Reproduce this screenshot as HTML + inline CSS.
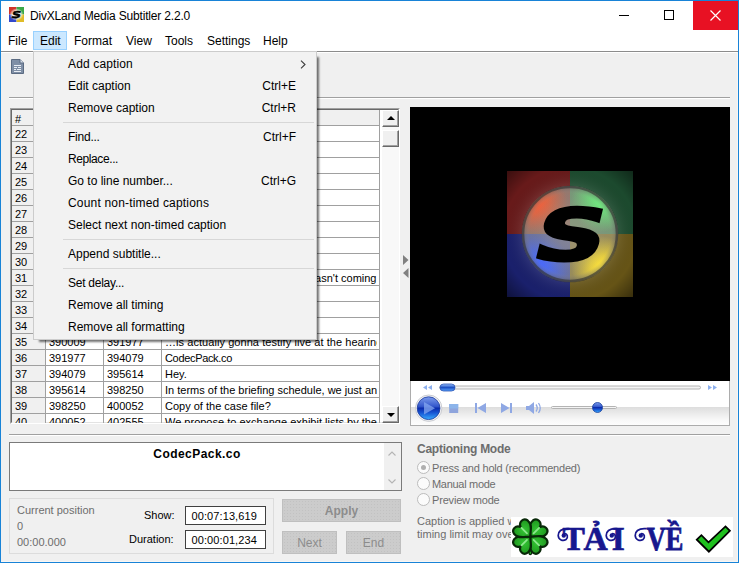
<!DOCTYPE html>
<html lang="en">
<head>
<meta charset="utf-8">
<title>DivXLand Media Subtitler 2.2.0</title>
<style>
*{box-sizing:border-box;margin:0;padding:0}
html,body{width:739px;height:563px;overflow:hidden}
body{position:relative;background:#f0f0f0;font-family:"Liberation Sans",sans-serif;font-size:12px;color:#000;line-height:1}
.a{position:absolute}
.t{position:absolute;white-space:nowrap;line-height:14px;height:14px}
.ui{font-size:12px}
.tb{font-size:11px}
#frame{left:0;top:0;width:739px;height:563px;border:1px solid #1883d7;z-index:50;pointer-events:none}
#title{left:1px;top:1px;width:737px;height:30px;background:#fff}
#menubar{left:1px;top:31px;width:737px;height:20px;background:#fff}
#edit-hl{left:33px;top:31px;width:34px;height:19px;background:#cce8ff;border:1px solid #99d1ff}
#close{left:693px;top:1px;width:45px;height:29px;background:#e81123}
/* dropdown */
#menu{left:33px;top:51px;width:284px;height:289px;background:#f2f2f2;border:1px solid #ccc;z-index:20;box-shadow:4px 4px 2px -2px rgba(0,0,0,.55)}
#menu .t{left:34px}
#menu .k{left:auto;right:20px}
#menu .sep{position:absolute;left:29px;right:2px;height:1px;background:#d7d7d7}
/* table */
#grid{left:10px;top:108px;width:390px;height:316px;background:#fff;border:1px solid #a0a0a0;border-right-color:#fff;border-bottom-color:#fff;overflow:hidden}
#grid .in{position:absolute;left:0;top:0;right:0;bottom:0;border:1px solid #696969;border-right-color:#e3e3e3;border-bottom-color:#e3e3e3}

#grid .hl{left:1px;width:368px;height:1px;background:#a0a0a0}
#grid .vl{top:1px;width:1px;height:314px;background:#a0a0a0}
#grid .tb{line-height:13px;height:13px}

.ln{height:2px;border-top:1px solid #a0a0a0;border-bottom:1px solid #fff}
/* scrollbar */
#sb{left:382px;top:110px;width:17px;height:313px;background:#f8f8f8}
.btn3{position:absolute;left:0;width:17px;height:17px;background:#f0f0f0;border:1px solid #fff;border-right-color:#696969;border-bottom-color:#696969;box-shadow:inset -1px -1px 0 #a0a0a0}
/* video */
#video{left:410px;top:107px;width:320px;height:274px;background:#000}
#ctrl{left:410px;top:381px;width:320px;height:45px;background:linear-gradient(#fff 0,#fff 25.5px,#dedede 26.5px,#ececec 33px,#f8f8f8 39px,#fdfdfd 44px);border:1px solid #acacac;border-top:0}

#txt{left:9px;top:442px;width:393px;height:49px;background:#fff;border:1px solid #7a7a7a}
#grp{left:9px;top:498px;width:265px;height:56px;border:1px solid #dcdcdc}
.inp{position:absolute;width:81px;height:19px;background:#fff;border:1px solid #404040}
.dis{color:#6d6d6d}
.btn{position:absolute;background:#cccccc;border:1px solid #bfbfbf;background-image:radial-gradient(#c2c2c2 0.6px,transparent 0.7px);background-size:3px 3px}
.rad{position:absolute;width:13px;height:13px;border-radius:50%;border:1px solid #bcbcbc;background:#fbfbfb}
#wm{left:511px;top:517px;width:222px;height:40px;background:#fff;z-index:30}
</style>
</head>
<body>
<div id="title" class="a"></div>
<span class="t ui" style="left:30px;top:9px;letter-spacing:-0.18px">DivXLand Media Subtitler 2.2.0</span>
<div id="close" class="a"></div>
<div id="menubar" class="a"></div>
<div id="edit-hl" class="a"></div>
<span class="t ui" style="left:8px;top:34px">File</span>
<span class="t ui" style="left:40px;top:34px">Edit</span>
<span class="t ui" style="left:74px;top:34px">Format</span>
<span class="t ui" style="left:126px;top:34px">View</span>
<span class="t ui" style="left:165px;top:34px">Tools</span>
<span class="t ui" style="left:207px;top:34px">Settings</span>
<span class="t ui" style="left:263px;top:34px">Help</span>

<div id="grid" class="a"><div class="in"></div>
<div class="a" style="left:1px;top:1px;width:34px;height:314px;background:#f0f0f0"></div>
<div class="a" style="left:1px;top:1px;width:368px;height:16px;background:#f0f0f0"></div>
<div class="a hl" style="top:16px"></div>
<div class="a hl" style="top:32px"></div>
<div class="a hl" style="top:48px"></div>
<div class="a hl" style="top:64px"></div>
<div class="a hl" style="top:80px"></div>
<div class="a hl" style="top:96px"></div>
<div class="a hl" style="top:112px"></div>
<div class="a hl" style="top:128px"></div>
<div class="a hl" style="top:144px"></div>
<div class="a hl" style="top:160px"></div>
<div class="a hl" style="top:176px"></div>
<div class="a hl" style="top:192px"></div>
<div class="a hl" style="top:208px"></div>
<div class="a hl" style="top:224px"></div>
<div class="a hl" style="top:240px"></div>
<div class="a hl" style="top:256px"></div>
<div class="a hl" style="top:272px"></div>
<div class="a hl" style="top:288px"></div>
<div class="a hl" style="top:304px"></div>
<div class="a vl" style="left:34px"></div>
<div class="a vl" style="left:92px"></div>
<div class="a vl" style="left:150px"></div>
<div class="a vl" style="left:368px"></div>
<span class="t tb" style="left:4px;top:4px">#</span>
<span class="t tb" style="left:4px;top:19px">22</span>
<span class="t tb" style="left:4px;top:35px">23</span>
<span class="t tb" style="left:4px;top:51px">24</span>
<span class="t tb" style="left:4px;top:67px">25</span>
<span class="t tb" style="left:4px;top:83px">26</span>
<span class="t tb" style="left:4px;top:99px">27</span>
<span class="t tb" style="left:4px;top:115px">28</span>
<span class="t tb" style="left:4px;top:131px">29</span>
<span class="t tb" style="left:4px;top:147px">30</span>
<span class="t tb" style="left:4px;top:163px">31</span>
<span class="t tb" style="left:4px;top:179px">32</span>
<span class="t tb" style="left:4px;top:195px">33</span>
<span class="t tb" style="left:4px;top:211px">34</span>
<span class="t tb" style="left:4px;top:227px">35</span>
<span class="t tb" style="left:38px;top:227px">390009</span>
<span class="t tb" style="left:96px;top:227px">391977</span>
<span class="t tb" style="left:4px;top:243px">36</span>
<span class="t tb" style="left:38px;top:243px">391977</span>
<span class="t tb" style="left:96px;top:243px">394079</span>
<span class="t tb" style="left:4px;top:259px">37</span>
<span class="t tb" style="left:38px;top:259px">394079</span>
<span class="t tb" style="left:96px;top:259px">395614</span>
<span class="t tb" style="left:4px;top:275px">38</span>
<span class="t tb" style="left:38px;top:275px">395614</span>
<span class="t tb" style="left:96px;top:275px">398250</span>
<span class="t tb" style="left:4px;top:291px">39</span>
<span class="t tb" style="left:38px;top:291px">398250</span>
<span class="t tb" style="left:96px;top:291px">400052</span>
<span class="t tb" style="left:4px;top:307px">40</span>
<span class="t tb" style="left:38px;top:307px">400052</span>
<span class="t tb" style="left:96px;top:307px">402555</span>
<div class="a" style="left:151px;top:1px;width:215px;height:314px;overflow:hidden">
<span class="t tb" style="left:3px;top:226px;letter-spacing:0.06px">…is actually gonna testify live at the hearing</span>
<span class="t tb" style="left:3px;top:242px;letter-spacing:-0.33px">CodecPack.co</span>
<span class="t tb" style="left:3px;top:258px">Hey.</span>
<span class="t tb" style="left:3px;top:274px">In terms of the briefing schedule, we just an</span>
<span class="t tb" style="left:3px;top:290px">Copy of the case file?</span>
<span class="t tb" style="left:3px;top:306px">We propose to exchange exhibit lists by the</span>
<span class="t tb" style="right:0.500px;top:162px">I told you before that he wasn't coming</span>
</div>
</div>


<!-- title icon -->
<svg class="a" style="left:9px;top:7px" width="15" height="15" viewBox="0 0 15 15">
<defs><radialGradient id="ig" cx="0.5" cy="0.5" r="0.5"><stop offset="0.55" stop-color="#f4f0e6"/><stop offset="1" stop-color="#f4f0e6" stop-opacity="0"/></radialGradient></defs>
<rect x="0" y="0" width="7.500" height="7.500" fill="#d0342a"/><rect x="7.500" y="0" width="7.500" height="7.500" fill="#3aa848"/>
<rect x="0" y="7.500" width="7.500" height="7.500" fill="#3148cc"/><rect x="7.500" y="7.500" width="7.500" height="7.500" fill="#e0bc28"/>
<ellipse cx="7.500" cy="7.500" rx="7" ry="6.300" fill="url(#ig)"/>
<text x="7.500" y="11" font-family="DejaVu Sans, sans-serif" font-weight="bold" font-size="9.500" text-anchor="middle" fill="#000" stroke="#000" stroke-width="0.500" transform="translate(7.500 7.500) skewX(-14) scale(1.35 1) translate(-7.500 -7.500)">S</text>
</svg>
<!-- window buttons -->
<div class="a" style="left:619px;top:15px;width:10px;height:1px;background:#000"></div>
<div class="a" style="left:664px;top:10px;width:10px;height:10px;border:1px solid #000"></div>
<svg class="a" style="left:710px;top:10px" width="11" height="11" viewBox="0 0 11 11"><path d="M0.5 0.5L10.5 10.5M10.5 0.5L0.5 10.5" stroke="#fff" stroke-width="1.2" fill="none"/></svg>
<!-- toolbar -->
<div class="a ln" style="left:1px;top:51px;width:737px;border-top-color:#8c8c8c"></div>
<div class="a ln" style="left:9px;top:97px;width:721px"></div>
<svg class="a" style="left:11px;top:59px" width="13" height="15" viewBox="0 0 13 15">
<path d="M0.5 0.5H9L12.5 4V14.5H0.5Z" fill="#7f8fa6" stroke="#5b6b82"/>
<path d="M9 0.5V4H12.5" fill="#dfe6ef" stroke="#5b6b82"/>
<path d="M3 6.5H10M3 8.5H6M7 8.5H10M3 10.5H5M6 10.5H10M3 12.5H10" stroke="#e8edf4" stroke-width="1"/>
</svg>
<!-- scrollbar -->
<div id="sb" class="a">
<div class="btn3" style="top:0"></div>
<div class="btn3" style="top:20px"></div>
<div class="btn3" style="top:296px"></div>
<svg class="a" style="left:5px;top:6px" width="8" height="4" viewBox="0 0 8 4"><path d="M0 4L4 0L8 4Z" fill="#000"/></svg>
<svg class="a" style="left:5px;top:303px" width="8" height="4" viewBox="0 0 8 4"><path d="M0 0L4 4L8 0Z" fill="#000"/></svg>
</div>
<!-- splitter arrows -->
<svg class="a" style="left:403px;top:255px" width="6" height="24" viewBox="0 0 6 24"><path d="M0 0L5.5 5L0 10Z M5.5 13L0 18L5.5 23Z" fill="#808080"/></svg>
<!-- video -->
<div id="video" class="a">
<svg class="a" style="left:97px;top:64px" width="126" height="126" viewBox="0 0 126 126">
<defs>
<radialGradient id="qg" cx="63" cy="63" r="89" gradientUnits="userSpaceOnUse"><stop offset="0.5" stop-color="#fff" stop-opacity="0.12"/><stop offset="0.75" stop-color="#000" stop-opacity="0"/><stop offset="1" stop-color="#000" stop-opacity="0.45"/></radialGradient>
<radialGradient id="cg" cx="63" cy="63" r="48" gradientUnits="userSpaceOnUse"><stop offset="0" stop-color="#a09888" stop-opacity="0.55"/><stop offset="0.5" stop-color="#a09888" stop-opacity="0.25"/><stop offset="0.85" stop-color="#888" stop-opacity="0"/><stop offset="1" stop-color="#444" stop-opacity="0.5"/></radialGradient>
<radialGradient id="s1"><stop offset="0" stop-color="#f0603c"/><stop offset="0.35" stop-color="#e8643f" stop-opacity="0.85"/><stop offset="1" stop-color="#e8643f" stop-opacity="0"/></radialGradient>
<radialGradient id="s2"><stop offset="0" stop-color="#70f080"/><stop offset="0.35" stop-color="#6ee07c" stop-opacity="0.85"/><stop offset="1" stop-color="#6ee07c" stop-opacity="0"/></radialGradient>
<radialGradient id="s3"><stop offset="0" stop-color="#4868ff"/><stop offset="0.35" stop-color="#4c6cf4" stop-opacity="0.85"/><stop offset="1" stop-color="#4c6cf4" stop-opacity="0"/></radialGradient>
<radialGradient id="s4"><stop offset="0" stop-color="#ffe43c"/><stop offset="0.35" stop-color="#f2d83c" stop-opacity="0.85"/><stop offset="1" stop-color="#f2d83c" stop-opacity="0"/></radialGradient>
<clipPath id="cc"><circle cx="63" cy="63" r="48"/></clipPath>
</defs>
<rect x="0" y="0" width="63" height="63" fill="#681a1a"/><rect x="63" y="0" width="63" height="63" fill="#1c4a2e"/>
<rect x="0" y="63" width="63" height="63" fill="#1a206c"/><rect x="63" y="63" width="63" height="63" fill="#665416"/>
<rect width="126" height="126" fill="url(#qg)"/>
<g clip-path="url(#cc)">
<rect x="0" y="0" width="63" height="63" fill="#96786e"/><rect x="63" y="0" width="63" height="63" fill="#789878"/>
<rect x="0" y="63" width="63" height="63" fill="#6a72a2"/><rect x="63" y="63" width="63" height="63" fill="#988c5a"/>
<circle cx="31" cy="33" r="30" fill="url(#s1)"/><circle cx="94" cy="31" r="30" fill="url(#s2)"/>
<circle cx="33" cy="94" r="30" fill="url(#s3)"/><circle cx="94" cy="95" r="30" fill="url(#s4)"/>
<circle cx="63" cy="63" r="48" fill="url(#cg)"/>
</g>
<circle cx="63" cy="63" r="47" fill="none" stroke="#303030" stroke-opacity="0.6" stroke-width="2.600"/>
<text x="63" y="89.500" font-family="DejaVu Sans, sans-serif" font-weight="bold" font-size="71" text-anchor="middle" fill="#000" stroke="#000" stroke-width="3" stroke-linejoin="miter" transform="translate(63 63) skewX(-14) scale(1.37 1) translate(-61.800 -63)">S</text>
</svg>
</div>
<div id="ctrl" class="a">
<svg class="a" style="left:-1px;top:0" width="320" height="44" viewBox="0 0 320 44">
<defs>
<linearGradient id="pb" x1="0" y1="0" x2="0" y2="1"><stop offset="0" stop-color="#7c9cec"/><stop offset="0.42" stop-color="#3458cc"/><stop offset="0.5" stop-color="#0c2cac"/><stop offset="0.68" stop-color="#1450d0"/><stop offset="1" stop-color="#38acff"/></linearGradient>
<linearGradient id="th" x1="0" y1="0" x2="0" y2="1"><stop offset="0" stop-color="#9cc4ff"/><stop offset="0.5" stop-color="#1c50c4"/><stop offset="1" stop-color="#5aa6ff"/></linearGradient>
</defs>
<!-- seek -->
<path d="M13 6.5L17 4V9ZM18 6.5L22 4V9Z" fill="#8db0ee"/>
<path d="M298 4L302 6.5L298 9ZM303 4L307 6.5L303 9Z" fill="#8db0ee"/>
<rect x="29.500" y="5" width="261" height="3" rx="1.500" fill="#f4f4f4" stroke="#b4b4b4"/>
<rect x="30" y="3" width="15" height="7" rx="3.500" fill="url(#th)" stroke="#2c54b4" stroke-width="0.800"/>
<!-- play -->
<circle cx="18.700" cy="27.200" r="13.200" fill="#f4f4f6" stroke="#c4c6cc" stroke-width="0.900"/>
<circle cx="18.600" cy="27.200" r="11.400" fill="url(#pb)" stroke="#1a3a9c" stroke-width="0.800"/>
<path d="M14 21L25 27.300L14 33.600Z" fill="#86a8f0" fill-opacity="0.75"/>
<!-- stop -->
<rect x="39.200" y="23" width="9" height="9" fill="#8ea4dc"/><rect x="39.200" y="23" width="9" height="4.500" fill="#8cb4ea"/>
<!-- prev -->
<path d="M65 22H67V32H65ZM76 22V32L67.500 27Z" fill="#8fa8e4"/>
<!-- next -->
<path d="M100 22H102V32H100ZM91 22V32L99.500 27Z" fill="#8fa8e4"/>
<!-- volume -->
<path d="M116 25H119L124 21V33L119 29H116Z" fill="#8fa8e4"/>
<path d="M126 23.500Q128.500 27 126 30.500M128.500 22Q132 27 128.500 32" fill="none" stroke="#8fa8e4" stroke-width="1.300"/>
<rect x="141.500" y="25.500" width="65" height="2" rx="1" fill="#f4f4f4" stroke="#b4b4b4"/>
<circle cx="187.500" cy="26.500" r="5" fill="url(#pb)" stroke="#173f9c" stroke-width="0.800"/>
</svg>
</div>


<!-- bottom -->
<div class="a ln" style="left:9px;top:434px;width:721px"></div>
<div id="txt" class="a">
<span class="t" style="left:0;width:374px;text-align:center;top:4px;font-size:12px;font-weight:bold;letter-spacing:0.45px">CodecPack.co</span>
<div class="a" style="right:0;top:0;width:17px;height:47px;background:#f0f0f0"></div>
<svg class="a" style="right:5px;top:8px" width="8" height="34" viewBox="0 0 8 34"><path d="M0.500 4.500L4 1L7.500 4.500M0.500 28.500L4 32L7.500 28.500" fill="none" stroke="#b4b4b4" stroke-width="1.100"/></svg>
</div>
<div id="grp" class="a"></div>
<span class="t tb dis" style="left:17px;top:503px">Current position</span>
<span class="t tb dis" style="left:17px;top:519px">0</span>
<span class="t tb dis" style="left:17px;top:535px">00:00.000</span>
<span class="t tb" style="left:144px;top:508px">Show:</span>
<span class="t tb" style="left:129px;top:532px">Duration:</span>
<div class="inp" style="left:185px;top:506px"></div><span class="t tb" style="left:191.500px;top:509px;letter-spacing:0.1px">00:07:13,619</span>
<div class="inp" style="left:185px;top:530px"></div><span class="t tb" style="left:191.500px;top:533px;letter-spacing:0.1px">00:00:01,234</span>
<div class="btn" style="left:282px;top:499px;width:119px;height:23px"></div>
<span class="t ui" style="left:282px;width:119px;text-align:center;top:504px;font-weight:bold;color:#8c8c8c">Apply</span>
<div class="btn" style="left:282px;top:531px;width:55px;height:23px"></div>
<span class="t ui" style="left:282px;width:55px;text-align:center;top:536px;color:#8c8c8c">Next</span>
<div class="btn" style="left:346px;top:531px;width:55px;height:23px"></div>
<span class="t ui" style="left:346px;width:55px;text-align:center;top:536px;color:#8c8c8c">End</span>
<!-- captioning mode -->
<span class="t tb dis" style="left:417px;top:442px;font-weight:bold;font-size:12px;letter-spacing:-0.26px">Captioning Mode</span>
<div class="rad" style="left:417px;top:461px"><div class="a" style="left:3px;top:3px;width:5px;height:5px;border-radius:50%;background:#b0b0b0"></div></div>
<div class="rad" style="left:417px;top:477px"></div>
<div class="rad" style="left:417px;top:493px"></div>
<span class="t tb dis" style="left:432px;top:461px;letter-spacing:-0.21px">Press and hold (recommended)</span>
<span class="t tb dis" style="left:432px;top:477px;letter-spacing:-0.3px">Manual mode</span>
<span class="t tb dis" style="left:432px;top:493px;letter-spacing:-0.18px">Preview mode</span>
<span class="t tb dis" style="left:417px;top:514px">Caption is applied while pressing and holding</span>
<span class="t tb dis" style="left:417px;top:527px">timing limit may overlap</span>
<!-- watermark -->
<div id="wm" class="a">
<svg class="a" style="left:0;top:0" width="222" height="40" viewBox="0 0 222 40">
<defs><radialGradient id="lf" cx="0" cy="-10" r="12" gradientUnits="userSpaceOnUse"><stop offset="0" stop-color="#34c434"/><stop offset="1" stop-color="#1d961d"/></radialGradient></defs><path d="M19.300 30V36.500" stroke="#082808" stroke-width="3.600" stroke-linecap="round"/><path d="M19.300 30V36.300" stroke="#25a825" stroke-width="1.400" stroke-linecap="round"/>
<g stroke="#082808" stroke-width="2.400" fill="url(#lf)" stroke-linejoin="round">
<path transform="translate(19.300 19.600) rotate(45) scale(0.91)" d="M0 0C-3.500 -4 -11.500 -7 -10.500 -14.500C-9.500 -20.500 -2 -20.500 0 -15C2 -20.500 9.500 -20.500 10.500 -14.500C11.500 -7 3.500 -4 0 0Z"/>
<path transform="translate(19.300 19.600) rotate(135) scale(0.91)" d="M0 0C-3.500 -4 -11.500 -7 -10.500 -14.500C-9.500 -20.500 -2 -20.500 0 -15C2 -20.500 9.500 -20.500 10.500 -14.500C11.500 -7 3.500 -4 0 0Z"/>
<path transform="translate(19.300 19.600) rotate(225) scale(0.91)" d="M0 0C-3.500 -4 -11.500 -7 -10.500 -14.500C-9.500 -20.500 -2 -20.500 0 -15C2 -20.500 9.500 -20.500 10.500 -14.500C11.500 -7 3.500 -4 0 0Z"/>
<path transform="translate(19.300 19.600) rotate(315) scale(0.91)" d="M0 0C-3.500 -4 -11.500 -7 -10.500 -14.500C-9.500 -20.500 -2 -20.500 0 -15C2 -20.500 9.500 -20.500 10.500 -14.500C11.500 -7 3.500 -4 0 0Z"/>
</g>
<path d="M16 16.300L10.500 10.800M22.600 16.300L28.100 10.800M16 22.900L10.500 28.400M22.600 22.900L28.100 28.400" stroke="#8ce88c" stroke-width="1.800" stroke-linecap="round" fill="none"/>
<text x="51.500 72.500 100.700" y="32.800" font-family="Liberation Serif, serif" font-weight="bold" font-size="33.500" fill="#17178e" stroke="#17178e" stroke-width="0.700">TẢI</text>
<text x="0 23.900" y="32.800" transform="translate(135.500 0) scale(0.8 1)" font-family="Liberation Serif, serif" font-weight="bold" font-size="33.500" fill="#17178e" stroke="#17178e" stroke-width="0.800">VỀ</text>
<path d="M58 11.7C50 11 47 15 47.2 18.5C47.5 23 52 24.5 55 22.5C57.5 20.5 56.5 16.5 53.5 16.5" fill="none" stroke="#17178e" stroke-width="1.700" stroke-linecap="round"/><circle cx="52.8" cy="18.5" r="2.200" fill="#17178e"/>
<path d="M106 11.7C98 11 95 15 95.2 18.5C95.5 23 100 24.5 103 22.5C105.5 20.5 104.5 16.5 101.5 16.5" fill="none" stroke="#17178e" stroke-width="1.700" stroke-linecap="round"/><circle cx="100.8" cy="18.5" r="2.200" fill="#17178e"/>
<path d="M135 11.7C127 11 124 15 124.2 18.5C124.5 23 129 24.5 132 22.5C134.5 20.5 133.5 16.5 130.5 16.5" fill="none" stroke="#17178e" stroke-width="1.700" stroke-linecap="round"/><circle cx="129.8" cy="18.5" r="2.200" fill="#17178e"/>
<path d="M185.800 22.700L190.400 18.200L197.500 25.300L214.500 9.400L218.900 13.800L197.900 34.700Z" fill="#1fc01f" stroke="#000" stroke-width="1.800" stroke-linejoin="miter"/>
</svg>
</div>

<div id="menu" class="a">
<span class="t ui" style="top:5px;letter-spacing:0.14px">Add caption</span>
<svg class="a" style="left:266px;top:7.500px" width="6" height="9" viewBox="0 0 6 9"><path d="M1 0.700L5 4.500L1 8.300" fill="none" stroke="#3c3c3c" stroke-width="1.100"/></svg>
<span class="t ui" style="top:27px">Edit caption</span><span class="t ui k" style="top:27px">Ctrl+E</span>
<span class="t ui" style="top:49px">Remove caption</span><span class="t ui k" style="top:49px">Ctrl+R</span>
<div class="sep" style="top:70px"></div>
<span class="t ui" style="top:78px;letter-spacing:-0.24px">Find...</span><span class="t ui k" style="top:78px">Ctrl+F</span>
<span class="t ui" style="top:100px;letter-spacing:-0.4px">Replace...</span>
<span class="t ui" style="top:122px">Go to line number...</span><span class="t ui k" style="top:122px">Ctrl+G</span>
<span class="t ui" style="top:144px;letter-spacing:0.18px">Count non-timed captions</span>
<span class="t ui" style="top:166px">Select next non-timed caption</span>
<div class="sep" style="top:187px"></div>
<span class="t ui" style="top:195px">Append subtitle...</span>
<div class="sep" style="top:216px"></div>
<span class="t ui" style="top:224px;letter-spacing:-0.25px">Set delay...</span>
<span class="t ui" style="top:246px">Remove all timing</span>
<span class="t ui" style="top:268px">Remove all formatting</span>
</div>

<div class="a" style="left:737px;top:52px;width:1px;height:510px;background:#f8f6f4"></div>
<div class="a" style="left:1px;top:561px;width:737px;height:1px;background:#f8f6f4"></div>
<div id="frame" class="a"></div>
</body>
</html>
